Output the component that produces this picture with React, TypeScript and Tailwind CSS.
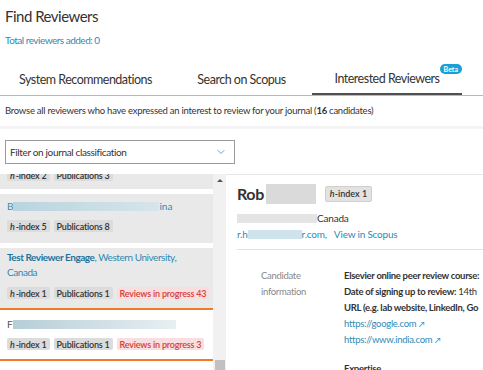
import { ChevronDown } from "lucide-react";

const font = { fontFamily: "Lato, 'Noto Sans', sans-serif" };

function Badge({ children, tone = "gray" }: { children: React.ReactNode; tone?: "gray" | "red" }) {
  return (
    <span
      className={`inline-flex h-[12px] items-center whitespace-nowrap rounded-[2px] px-[3px] text-[9px] font-semibold leading-none tracking-[-0.2px] ${
        tone === "red" ? "bg-[#f8dede] text-[#d6403a]" : "bg-[#dcdcdc] text-[#333]"
      }`}
    >
      {children}
    </span>
  );
}

function HIndex({ n }: { n: number }) {
  return (
    <Badge>
      <i className="mr-[1px]">h</i>-index {n}
    </Badge>
  );
}

export default function App() {
  return (
    <div className="h-[370px] w-[483px] overflow-hidden bg-white text-[#333]" style={font}>
      {/* Header */}
      <div className="px-[5px] pt-[6px]">
        <h1 className="text-[15px] leading-[20px] tracking-[-0.5px]">Find Reviewers</h1>
        <p className="mt-[8px] text-[10px] leading-[12px] tracking-[-0.5px] text-[#2f8ab5]">Total reviewers added: 0</p>
      </div>

      {/* Tabs */}
      <div className="mt-[19px] flex h-[31px] border-b border-[#b8b8b8] text-[12.5px] tracking-[-0.5px]">
        <div className="flex w-[171px] items-center justify-center">System Recommendations</div>
        <div className="flex w-[141px] items-center justify-center">Search on Scopus</div>
        <div className="relative flex w-[150px] items-center justify-center border-b-2 border-[#505050]">
          Interested Reviewers
          <span className="absolute right-0 top-[-1px] rounded-full bg-[#1a9fd9] px-[4px] text-[7px] font-bold leading-[10px] tracking-normal text-white">
            Beta
          </span>
        </div>
      </div>

      <p className="whitespace-nowrap px-[5px] pt-[9px] text-[9.5px] leading-[12px] tracking-[-0.25px]">
        Browse all reviewers who have expressed an interest to review for your journal (<b>16</b> candidates)
      </p>

      <div className="mt-[9px] h-[3px] bg-[#f4f4f4]" />

      {/* Filter */}
      <div className="mx-[5px] mt-[11px] flex h-[24px] w-[230px] items-center justify-between border border-[#9a9a9a] px-[4px] text-[10px] tracking-[-0.35px]">
        <span>Filter on journal classification</span>
        <ChevronDown className="mr-[3px] h-[12px] w-[12px] text-[#2f8ab5]" strokeWidth={1.5} />
      </div>

      {/* List + details */}
      <div className="mt-[10px] flex h-[198px]">
        <div className="w-[213px] overflow-hidden">
          <div className="-mt-[10px]">
            <div className="bg-[#e9e9e9] px-[7px] pb-[8px] pt-[5px]">
              <div className="flex gap-[4px]">
                <HIndex n={2} />
                <Badge>Publications 3</Badge>
              </div>
            </div>
            <div className="h-[5px] bg-white" />
            <div className="bg-[#e9e9e9] px-[7px] pb-[11px] pt-[6px]">
              <div className="flex items-center text-[10px] leading-[12px] text-[#2f8ab5]">
                <span>B</span>
                <span className="h-[9px] w-[146px] bg-gradient-to-r from-[#b9d4de] to-[#d6e5ea]" />
                <span>ina</span>
              </div>
              <div className="mt-[8px] flex gap-[4px]">
                <HIndex n={5} />
                <Badge>Publications 8</Badge>
              </div>
            </div>
            <div className="h-[5px] bg-white" />
            <div className="border-b-2 border-[#f07a2a] bg-[#e9e9e9] px-[7px] pb-[9px] pt-[2px]">
              <p className="text-[10px] leading-[15px] tracking-[-0.45px] text-[#2f8ab5]">
                <b className="text-[#1f739b]">Test Reviewer Engage</b>, Western University,
                <br />
                Canada
              </p>
              <div className="mt-[7px] flex gap-[4px]">
                <HIndex n={1} />
                <Badge>Publications 1</Badge>
                <Badge tone="red">Reviews in progress 43</Badge>
              </div>
            </div>
            <div className="border-b-2 border-[#f07a2a] bg-white px-[7px] pb-[9px] pt-[8px]">
              <div className="flex items-center text-[10px] leading-[12px] text-[#2f8ab5]">
                <span className="text-[#555]">F</span>
                <span className="h-[9px] w-[163px] bg-gradient-to-r from-[#b6ced8] to-[#e8eff2]" />
              </div>
              <div className="mt-[8px] flex gap-[4px]">
                <HIndex n={1} />
                <Badge>Publications 1</Badge>
                <Badge tone="red">Reviews in progress 3</Badge>
              </div>
            </div>
          </div>
        </div>

        {/* Scrollbar */}
        <div className="flex w-[13px] flex-col items-center justify-between bg-[#f1f1f1]">
          <span className="mt-[5px] h-0 w-0 border-x-[3px] border-b-[3px] border-x-transparent border-b-[#555]" />
          <span className="h-[12px] w-[10px] bg-[#c1c1c1]" />
        </div>

        {/* Details */}
        <div className="flex-1 border-t border-[#e6e6e6] pl-[11px] pt-[7px]">
          <div className="flex items-center">
            <span className="text-[16px] font-bold tracking-[-0.4px]">Rob</span>
            <span className="ml-[2px] h-[20px] w-[50px] bg-[#dadada]" />
            <span className="ml-[9px] rounded-[2px] border border-[#cfcfcf] bg-[#e2e2e2] px-[4px] text-[9px] font-semibold leading-[14px]">
              <i>h</i>-index 1
            </span>
          </div>
          <div className="mt-[6px] flex items-center text-[10px] leading-[12px] tracking-[-0.2px]">
            <span className="h-[9px] w-[80px] bg-[#e4e4e4]" />
            <span>Canada</span>
          </div>
          <div className="mt-[4px] flex items-center text-[10px] leading-[12px] tracking-[-0.2px] text-[#2f8ab5]">
            <span>r.h</span>
            <span className="h-[9px] w-[54px] bg-[#cfe3ec]" />
            <span>r.com,</span>
            <span className="ml-[7px]">View in Scopus</span>
          </div>
          <div className="mt-[9px] border-t border-[#e2e2e2]" />
          <div className="mt-[18px] flex text-[9.5px] leading-[16px] tracking-[-0.3px]">
            <div className="w-[107px] shrink-0 pl-[24px] text-[#888]">
              Candidate
              <br />
              information
            </div>
            <div className="whitespace-nowrap">
              <p className="font-bold">Elsevier online peer review course:</p>
              <p>
                <b>Date of signing up to review:</b> 14th
              </p>
              <p className="font-bold">URL (e.g. lab website, LinkedIn, Go</p>
              <p className="text-[#2f8ab5]">
                https://google.com <span className="text-[8px]">↗</span>
              </p>
              <p className="text-[#2f8ab5]">
                https://www.india.com <span className="text-[8px]">↗</span>
              </p>
              <p className="mt-[13px] font-bold">Expertise</p>
            </div>
          </div>
        </div>
      </div>
    </div>
  );
}
